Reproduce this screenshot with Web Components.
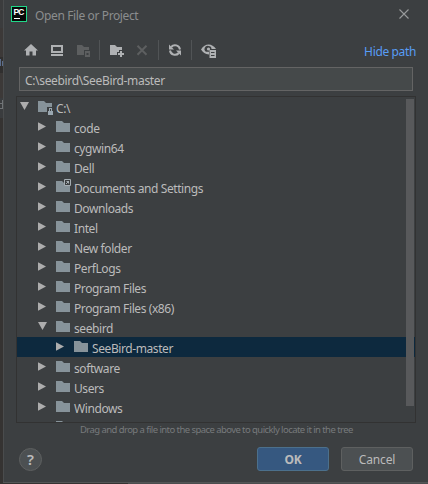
<!DOCTYPE html>
<html lang="en"><head><meta charset="utf-8"><title>Open File or Project</title>
<style>
html,body{margin:0;width:428px;height:484px;overflow:hidden;background:#3c3f41}
</style></head><body>
<file-dialog></file-dialog>
<script>
const FONT = '"Noto Sans","Open Sans",sans-serif';
const define = (name, html, setup) => customElements.define(name, class extends HTMLElement {
  connectedCallback() {
    if (this.shadowRoot) return;
    const t = document.createElement('template');
    t.innerHTML = html;
    this.attachShadow({mode: 'open'}).append(t.content.cloneNode(true));
    if (setup) setup(this, this.shadowRoot);
  }
});
const icons = {
  home: '<path d="M8 2 15 8.500h-2v5H9.500V9.500h-3v4H3v-5H1z"/>',
  desktop: '<path fill-rule="evenodd" d="M2 3h12v8H2zM4 5v4h8V5zM2 12h12v2H2z"/>',
  project: '<path d="M2 3h5l2 2h5v3H9v5H2z"/><path fill-rule="evenodd" d="M10 9h5v6h-5zM11.500 11v2h2v-2z"/>',
  newfolder: '<path d="M1 3h5l2 2h5v3h-3v2H8v3H1z"/><path d="M11 9h2v2h2v2h-2v2h-2v-2H9v-2h2z"/>',
  remove: '<path d="m3.500 3.800 9 9m0-9-9 9" fill="none" stroke="currentColor" stroke-width="2"/>',
  refresh: '<path d="M13 7.500A5 5 0 0 0 4.200 5M3 8.500A5 5 0 0 0 11.800 11" fill="none" stroke="currentColor" stroke-width="2"/><path d="M2 2.500v5h5zM14 13.500v-5H9z"/>',
  eye: '<path fill-rule="evenodd" d="M0 7.500C4 .8 11 .8 15 7H8v5.500C4 12 2 10.500 0 7.500zM7.500 4A3.200 3.200 0 0 0 5 9.800h3V7h2.500A3 3 0 0 0 7.500 4z"/><circle cx="7.500" cy="7" r="1.600"/><path fill-rule="evenodd" d="M8.500 8H15v8H8.500zM10 10v1h3.500v-1zM10 13v1h3.500v-1z"/>'
};
define('tool-icon', `<style>:host{display:block;flex:none;width:16px;height:16px;color:#afb1b3}:host([off]){color:#5d5f60}svg{display:block}</style><svg width="16" height="16" fill="currentColor"></svg>`,
  (h, r) => r.querySelector('svg').innerHTML = icons[h.getAttribute('name')]);
define('tool-bar', `<style>:host{display:flex;align-items:center;height:20px;font:12px/16px ${FONT}}</style><slot></slot>`);
define('title-bar', `<style>:host{display:flex;align-items:center;height:28px;padding:0 19px 0 7px;font:12px/16px ${FONT};color:#8b8d8e}
span{margin-left:8px;padding-top:3px;flex:1;letter-spacing:-.38px}.logo{display:block}</style>
<svg class="logo" width="16" height="16"><rect x=".5" y=".5" width="15" height="15" fill="#080808" stroke="#21d789"/><text x="2.500" y="9" font-family="Liberation Sans" font-size="8.500" font-weight="bold" fill="#fff" textLength="11">PC</text><path d="M3 12.500h6" stroke="#fff"/></svg>
<span><slot></slot></span><svg width="10" height="10"><path d="m.5.5 9 9m0-9-9 9" stroke="#999b9c" stroke-width="1.100"/></svg>`);
define('path-field', `<style>:host{display:flex;align-items:center;box-sizing:border-box;height:24px;border:1px solid #646464;background:#45494a;padding:3px 5px 0;color:#bbb;font:12px/16px ${FONT};letter-spacing:-.34px}</style><slot></slot>`);
define('tree-row', `<style>:host{display:flex;box-sizing:border-box;height:20px;align-items:center;color:#bbb;font:12px/18px ${FONT};white-space:nowrap;padding-left:21px;letter-spacing:-.41px}
:host([level="0"]){padding-left:3px}:host([level="2"]){padding-left:39px}:host([selected]){background:#0d293e}
svg{display:block;flex:none}.f{margin-left:2px;margin-right:2px}span{display:block;padding-top:4px}</style>
<svg class="a" width="16" height="16"><path fill="#adadad" d="M0 3.200 8 7.500 0 11.800z"/></svg>
<svg class="f" width="16" height="16"><path fill="#87939a" d="M0 2h6l2 2h6v9H0z"/></svg><span><slot></slot></span>`, (h, r) => {
  if (h.hasAttribute('open')) r.querySelector('.a path').setAttribute('d', 'M0 3h9L4.500 11z');
  const f = r.querySelector('.f'), m = h.getAttribute('mark');
  if (m === 'lock') f.innerHTML += '<path fill="#3c3f41" d="M9 8h7v8H9z"/><path fill="#9aa7b0" fill-rule="evenodd" d="M10 12h1V9h3v3h1v4h-5zM12 10v2h1v-2z"/>';
  if (m === 'link') f.innerHTML += '<path fill="#3c3f41" stroke="#a5adb2" d="M8.500.5h6v6h-6z"/><path stroke="#a5adb2" fill="none" d="m10 5 3-3M10.500 2.500h2v2"/>';
});
define('tree-view', `<style>:host{display:block;position:relative;box-sizing:border-box;height:327px;border:1px solid #323232;overflow:hidden}
i{position:absolute;right:1px;width:8px;top:2px;height:307px;background:#58595b}</style><slot></slot><i></i>`);
define('push-button', `<style>:host{display:flex;align-items:center;justify-content:center;box-sizing:border-box;width:72px;height:24px;padding-top:2px;border:1px solid #5e6060;border-radius:3px;background:#4c5052;color:#bbb;font:12px/20px ${FONT};letter-spacing:-.15px}
:host([primary]){background:#365880;border-color:#4c708c;font-weight:bold}:host([round]){width:23px;height:23px;padding:0;border-radius:50%;font-weight:600;font-size:15px}</style><slot></slot>`);
define('file-dialog', `<style>:host{display:grid;grid-template-columns:3px 1fr;width:428px;height:484px;background:#3c3f41}
.edge{background:linear-gradient(#3b3c3d 0 28px,#3c3938 28px 57px,#302f2f 57px 73px,#3c3938 73px 98px,#3a3c3e 98px 118px,#353332 118px)}
.edge svg{display:block}
.main{border-left:1px solid #4a4c4d;height:484px;box-sizing:border-box;display:grid;grid-template-rows:28px 12px 20px 7px 24px 5px 327px 18px 6px 24px 1fr}
path-field,footer{margin:0 15px}tree-view{margin:0 12px}
tool-bar{margin:0 12px 0 19px}tool-bar i{display:block;width:1px;height:20px;background:#515456;flex:none}
.link{color:#589df6;margin-left:auto;padding-top:3px;letter-spacing:-.36px}
.hint{font:9.500px/14px ${FONT};letter-spacing:-.565px;color:#777a7c;margin-left:76px;white-space:nowrap}
footer{display:flex;align-items:center}footer push-button[primary]{margin-left:auto;margin-right:12px}
.bottom{align-self:end;height:2px;margin-left:-1px;background:linear-gradient(#535556 50%,transparent 50%),linear-gradient(90deg,#353332 125px,#4b4d4e 125px)}</style>
<div class="edge"><svg width="3" height="120"><path d="M.5 59v7M2.500 61v5" stroke="#5b6d8c" fill="none"/><path d="M0 103.500h2M2.500 100v9M0 108.500h2" stroke="#707477" fill="none"/></svg></div><section class="main">
<title-bar>Open File or Project</title-bar><div></div>
<tool-bar><tool-icon name="home"></tool-icon><tool-icon name="desktop" style="margin-left:10px"></tool-icon><tool-icon name="project" off style="margin-left:10px"></tool-icon><i style="margin-left:8px"></i><tool-icon name="newfolder" style="margin-left:9px"></tool-icon><tool-icon name="remove" off style="margin-left:9px"></tool-icon><i style="margin-left:8px"></i><tool-icon name="refresh" style="margin-left:8px"></tool-icon><i style="margin-left:8px"></i><tool-icon name="eye" style="margin-left:9px"></tool-icon><span class="link">Hide path</span></tool-bar>
<div></div><path-field>C:\\seebird\\SeeBird-master</path-field><div></div>
<tree-view><tree-row level="0" open mark="lock">C:\\</tree-row><tree-row>code</tree-row><tree-row>cygwin64</tree-row><tree-row>Dell</tree-row><tree-row mark="link">Documents and Settings</tree-row><tree-row>Downloads</tree-row><tree-row>Intel</tree-row><tree-row>New folder</tree-row><tree-row>PerfLogs</tree-row><tree-row>Program Files</tree-row><tree-row>Program Files (x86)</tree-row><tree-row open>seebird</tree-row><tree-row level="2" selected>SeeBird-master</tree-row><tree-row>software</tree-row><tree-row>Users</tree-row><tree-row>Windows</tree-row><tree-row></tree-row></tree-view>
<div class="hint">Drag and drop a file into the space above to quickly locate it in the tree</div><div></div>
<footer><push-button round>?</push-button><push-button primary>OK</push-button><push-button>Cancel</push-button></footer><div class="bottom"></div>
</section>`);
</script></body></html>
